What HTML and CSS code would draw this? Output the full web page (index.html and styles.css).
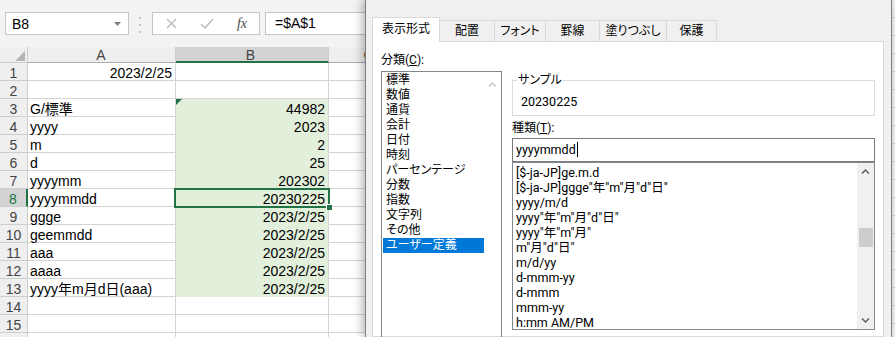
FILE: index.html
```html
<!DOCTYPE html>
<html lang="ja">
<head>
    <meta charset="UTF-8">
    <title>セルの書式設定</title>
    <link rel="stylesheet" href="styles.css">
</head>
<body>
<div class="app">
    <div class="sheet">
        <div class="fbar">
            <div class="namebox">
                <span>B8</span>
                <svg class="dd" width="7" height="4" viewBox="0 0 7 4"><path d="M0 0h7L3.5 4z" fill="#7f7f7f"/></svg>
            </div>
            <div class="grip">
                <svg width="2" height="16" viewBox="0 0 2 16"><rect y="0" width="2" height="2"/><rect y="7" width="2" height="2"/><rect y="14" width="2" height="2"/></svg>
            </div>
            <div class="fbtns">
                <span class="fb"><svg width="11" height="11" viewBox="0 0 11 11"><path d="M1 1l9 9M10 1l-9 9" stroke="#b9b9b9" stroke-width="1.3" fill="none"/></svg></span>
                <span class="fb"><svg width="14" height="11" viewBox="0 0 14 11"><path d="M1 6l4 4L13 1" stroke="#b9b9b9" stroke-width="1.4" fill="none"/></svg></span>
                <span class="fb fx">fx</span>
            </div>
            <div class="finput">=$A$1</div>
        </div>

        <!-- シート -->
        <div class="grid">
            <div class="row head">
                <div class="rh corner"><svg width="10" height="10" viewBox="0 0 10 10"><path d="M10 0V10H0z" fill="#b5b5b5"/></svg></div>
                <div class="ca">A</div>
                <div class="cb on">B</div>
                <div class="cc">C</div>
            </div>
            <div class="row"><div class="rh">1</div><div class="ca num">2023/2/25</div><div class="cb"></div><div class="cc"></div></div>
            <div class="row"><div class="rh">2</div><div class="ca"></div><div class="cb"></div><div class="cc"></div></div>
            <div class="row"><div class="rh">3</div><div class="ca">G/標準</div><div class="cb fill err">44982</div><div class="cc"></div></div>
            <div class="row"><div class="rh">4</div><div class="ca">yyyy</div><div class="cb fill">2023</div><div class="cc"></div></div>
            <div class="row"><div class="rh">5</div><div class="ca">m</div><div class="cb fill">2</div><div class="cc"></div></div>
            <div class="row"><div class="rh">6</div><div class="ca">d</div><div class="cb fill">25</div><div class="cc"></div></div>
            <div class="row"><div class="rh">7</div><div class="ca">yyyymm</div><div class="cb fill">202302</div><div class="cc"></div></div>
            <div class="row"><div class="rh on">8</div><div class="ca">yyyymmdd</div><div class="cb fill sel">20230225</div><div class="cc"></div></div>
            <div class="row"><div class="rh">9</div><div class="ca">ggge</div><div class="cb fill">2023/2/25</div><div class="cc"></div></div>
            <div class="row"><div class="rh">10</div><div class="ca">geemmdd</div><div class="cb fill">2023/2/25</div><div class="cc"></div></div>
            <div class="row"><div class="rh">11</div><div class="ca">aaa</div><div class="cb fill">2023/2/25</div><div class="cc"></div></div>
            <div class="row"><div class="rh">12</div><div class="ca">aaaa</div><div class="cb fill">2023/2/25</div><div class="cc"></div></div>
            <div class="row"><div class="rh">13</div><div class="ca">yyyy年m月d日(aaa)</div><div class="cb fill">2023/2/25</div><div class="cc"></div></div>
            <div class="row"><div class="rh">14</div><div class="ca"></div><div class="cb"></div><div class="cc"></div></div>
            <div class="row"><div class="rh">15</div><div class="ca"></div><div class="cb"></div><div class="cc"></div></div>
            <div class="row"><div class="rh"></div><div class="ca"></div><div class="cb"></div><div class="cc"></div></div>
        </div>
    </div>

    <!-- セルの書式設定ダイアログ -->
    <div class="dialog">
        <div class="tabs">
            <div class="tab on t1">表示形式</div>
            <div class="tab t2">配置</div>
            <div class="tab t3">フォント</div>
            <div class="tab t4">罫線</div>
            <div class="tab t5">塗りつぶし</div>
            <div class="tab t6">保護</div>
        </div>
        <div class="panel">
            <div class="cat">
                <div class="lbl">分類(<u>C</u>):</div>
                <div class="catlist">
                    <div class="catitems">
                        <div>標準</div>
                        <div>数値</div>
                        <div>通貨</div>
                        <div>会計</div>
                        <div>日付</div>
                        <div>時刻</div>
                        <div>パーセンテージ</div>
                        <div>分数</div>
                        <div>指数</div>
                        <div>文字列</div>
                        <div>その他</div>
                        <div class="on">ユーザー定義</div>
                    </div>
                    <div class="catbar">
                        <svg width="9" height="5" viewBox="0 0 9 5"><path d="M1 4.5L4.5 1L8 4.5" fill="none" stroke="#c4c4c4" stroke-width="1.4"/></svg>
                    </div>
                </div>
            </div>
            <div class="main">
                <fieldset class="sample">
                    <legend>サンプル</legend>
                    <div class="sval">20230225</div>
                </fieldset>
                <div class="lbl lbl2">種類(<u>T</u>):</div>
                <div class="tinput">yyyymmdd<span class="caret"></span></div>
                <div class="flist">
                    <div class="fitems">
                        <div>[$-ja-JP]ge.m.d</div>
                        <div>[$-ja-JP]ggge"年"m"月"d"日"</div>
                        <div>yyyy/m/d</div>
                        <div>yyyy"年"m"月"d"日"</div>
                        <div>yyyy"年"m"月"</div>
                        <div>m"月"d"日"</div>
                        <div>m/d/yy</div>
                        <div>d-mmm-yy</div>
                        <div>d-mmm</div>
                        <div>mmm-yy</div>
                        <div>h:mm AM/PM</div>
                    </div>
                    <div class="sbar">
                        <div class="sbtn"><svg width="9" height="5" viewBox="0 0 9 5"><path d="M1 4.5L4.5 1L8 4.5" fill="none" stroke="#606060" stroke-width="1.5"/></svg></div>
                        <div class="track"><div class="thumb"></div></div>
                        <div class="sbtn"><svg width="9" height="5" viewBox="0 0 9 5"><path d="M1 0.5L4.5 4L8 0.5" fill="none" stroke="#606060" stroke-width="1.5"/></svg></div>
                    </div>
                </div>
            </div>
        </div>
    </div>
    <div class="behind"></div>
</div>
</body>
</html>
```

FILE: styles.css
```css
body {
    margin: 0;
    background: #fff;
}

.app {
    display: flex;
    width: 895px;
    height: 337px;
    overflow: hidden;
}

/* シート部分 */
.sheet {
    width: 365px;
    flex: none;
    overflow: hidden;
    background: #fff;
    font-family: "Liberation Sans", "Noto Sans CJK JP", sans-serif;
    color: #000;
}

.fbar {
    height: 47px;
    box-sizing: border-box;
    padding-top: 12px;
    background: #f3f3f3;
    display: flex;
    align-items: flex-start;
    white-space: nowrap;
}

.namebox {
    margin-left: 5px;
    width: 164px;
    height: 23px;
    box-sizing: border-box;
    border: 1px solid #c6c6c6;
    background: #fff;
    display: flex;
    align-items: center;
    padding-left: 6px;
    font-size: 14px;
}

.namebox .dd {
    margin-left: auto;
    margin-right: 7px;
}

.grip {
    width: 31px;
    height: 23px;
    display: flex;
    justify-content: center;
    padding-top: 5px;
    box-sizing: border-box;
    fill: #c3c3c3;
}

.fbtns {
    width: 108px;
    height: 23px;
    box-sizing: border-box;
    border: 1px solid #c6c6c6;
    background: #fff;
    display: flex;
}

.fb {
    width: 36px;
    display: flex;
    align-items: center;
    justify-content: center;
}

.fb.fx {
    width: 34px;
    font-family: "Liberation Serif", serif;
    font-style: italic;
    font-size: 14px;
    color: #4a4a4a;
}

.finput {
    margin-left: 5px;
    width: 100px;
    flex: none;
    height: 23px;
    box-sizing: border-box;
    border: 1px solid #c6c6c6;
    border-right: none;
    background: #fff;
    padding-left: 9px;
    font-size: 14px;
    line-height: 21px;
}

.row {
    display: flex;
    height: 18px;
}

.row > div {
    box-sizing: border-box;
    flex: none;
    border-right: 1px solid #d4d4d4;
    border-bottom: 1px solid #d4d4d4;
    padding-top: 3px;
    line-height: 15px;
    font-size: 14px;
    white-space: nowrap;
}

.rh {
    width: 28px;
    background: #efefef;
    text-align: center;
    color: #444;
    border-color: #cdcdcd !important;
}

.rh.on {
    background: #d3d3d3;
    color: #217346;
    border-right: 2px solid #217346 !important;
}

.ca {
    width: 148px;
    padding-left: 2px;
    padding-right: 3px;
}

.cb {
    width: 153px;
    text-align: right;
    padding-right: 3px;
}

.cc {
    width: 80px;
}

.num {
    text-align: right;
}

.fill {
    background: #e2efda;
    border-bottom-color: #e2efda !important;
}

.err {
    position: relative;
}

.err::before {
    content: "";
    position: absolute;
    left: 0;
    top: 0;
    border-top: 6px solid #1e7145;
    border-right: 6px solid transparent;
}

.sel {
    position: relative;
}

.sel::after {
    content: "";
    position: absolute;
    left: -2px;
    right: -2px;
    top: -1px;
    bottom: -2px;
    border: 2px solid #217346;
}

.sel::before {
    content: "";
    position: absolute;
    right: -4px;
    bottom: -4px;
    width: 5px;
    height: 5px;
    background: #217346;
    border-left: 1px solid #fff;
    border-top: 1px solid #fff;
    z-index: 1;
}

/* 見出し行 */
.row.head {
    height: 16px;
}

.row.head > div {
    background: #efefef;
    color: #444;
    text-align: center;
    padding-top: 1px;
    border-right-color: #cdcdcd;
    border-bottom-color: #ababab;
}

.row.head > .cb.on {
    background: #d3d3d3;
    border-bottom: 2px solid #217346;
}

.row.head > .corner {
    display: flex;
    justify-content: flex-end;
    align-items: flex-end;
    padding: 0 2px 1px 0;
}

/* ダイアログ */
.dialog {
    width: 527px;
    flex: none;
    box-sizing: border-box;
    border-left: 1px solid #7c7c7c;
    border-right: 1px solid #7c7c7c;
    background: #f0f0f0;
    padding: 0 7px 0 6px;
    display: flex;
    flex-direction: column;
    position: relative;
    box-shadow: -3px 0 9px rgba(0, 0, 0, 0.28);
    font-family: Roboto, "Noto Sans CJK JP", sans-serif;
    font-size: 12px;
    font-feature-settings: "palt";
    color: #000;
}

.tabs {
    display: flex;
    align-items: flex-end;
    height: 41px;
    flex: none;
}

.tab {
    box-sizing: border-box;
    height: 21px;
    border: 1px solid #d9d9d9;
    border-bottom: none;
    margin-left: -1px;
    text-align: center;
    line-height: 20px;
    white-space: nowrap;
}

.tab.on {
    position: relative;
    z-index: 1;
    height: 25px;
    margin-bottom: -1px;
    background: #fff;
    line-height: 22px;
}

.t1 { width: 68px; margin-left: 0; }
.t2 { width: 56px; }
.t3 { width: 52px; }
.t4 { width: 55px; }
.t5 { width: 68px; }
.t6 { width: 51px; }

.panel {
    flex: 1;
    min-height: 0;
    border: 1px solid #d9d9d9;
    background: #fff;
    display: flex;
    align-items: flex-start;
}

.lbl {
    line-height: 16px;
}

.cat {
    margin-left: 8px;
    padding-top: 10px;
    width: 121px;
}

.catlist {
    margin-top: 3px;
    height: 300px;
    box-sizing: border-box;
    border: 1px solid #828790;
    padding: 1px;
    display: flex;
}

.catitems {
    width: 101px;
}

.catitems div {
    line-height: 15px;
    padding-left: 3px;
    white-space: nowrap;
}

.catitems div.on {
    background: #0078d7;
    color: #fff;
}

.catbar {
    flex: 1;
    display: flex;
    justify-content: center;
    padding-top: 9px;
}

.main {
    margin-left: 10px;
    width: 363px;
}

.sample {
    margin: 30px 0 0;
    padding: 0 4px 5px;
    border: 1px solid #dcdcdc;
}

.sample legend {
    padding: 0 1px;
    line-height: 16px;
}

.sval {
    margin-top: 6px;
    padding-left: 4px;
    line-height: 16px;
    font-size: 12.5px;
}

.lbl2 {
    margin-top: 4px;
}

.tinput {
    margin-top: 2px;
    height: 24px;
    box-sizing: border-box;
    border: 1px solid #7a7a7a;
    padding-left: 3px;
    line-height: 22px;
    font-size: 12.5px;
}

.caret {
    display: inline-block;
    width: 0;
    height: 15px;
    border-left: 1px solid #000;
    vertical-align: -3px;
    margin-left: 1px;
}

.flist {
    height: 168px;
    box-sizing: border-box;
    border: 1px solid #828790;
    display: flex;
}

.fitems {
    flex: 1;
    padding: 2px 0 0 3px;
    font-size: 12.5px;
}

.fitems div {
    line-height: 15px;
    white-space: nowrap;
}

.sbar {
    width: 17px;
    background: #f0f0f0;
    display: flex;
    flex-direction: column;
}

.sbtn {
    height: 17px;
    flex: none;
    display: flex;
    align-items: center;
    justify-content: center;
}

.track {
    flex: 1;
}

.thumb {
    margin: 48px auto 0;
    width: 14px;
    height: 19px;
    background: #cdcdcd;
}

.behind {
    flex: 1;
    background: repeating-linear-gradient(to bottom, #eeeeee 0, #eeeeee 17px, #cfcfcf 17px, #cfcfcf 18px);
}
```
